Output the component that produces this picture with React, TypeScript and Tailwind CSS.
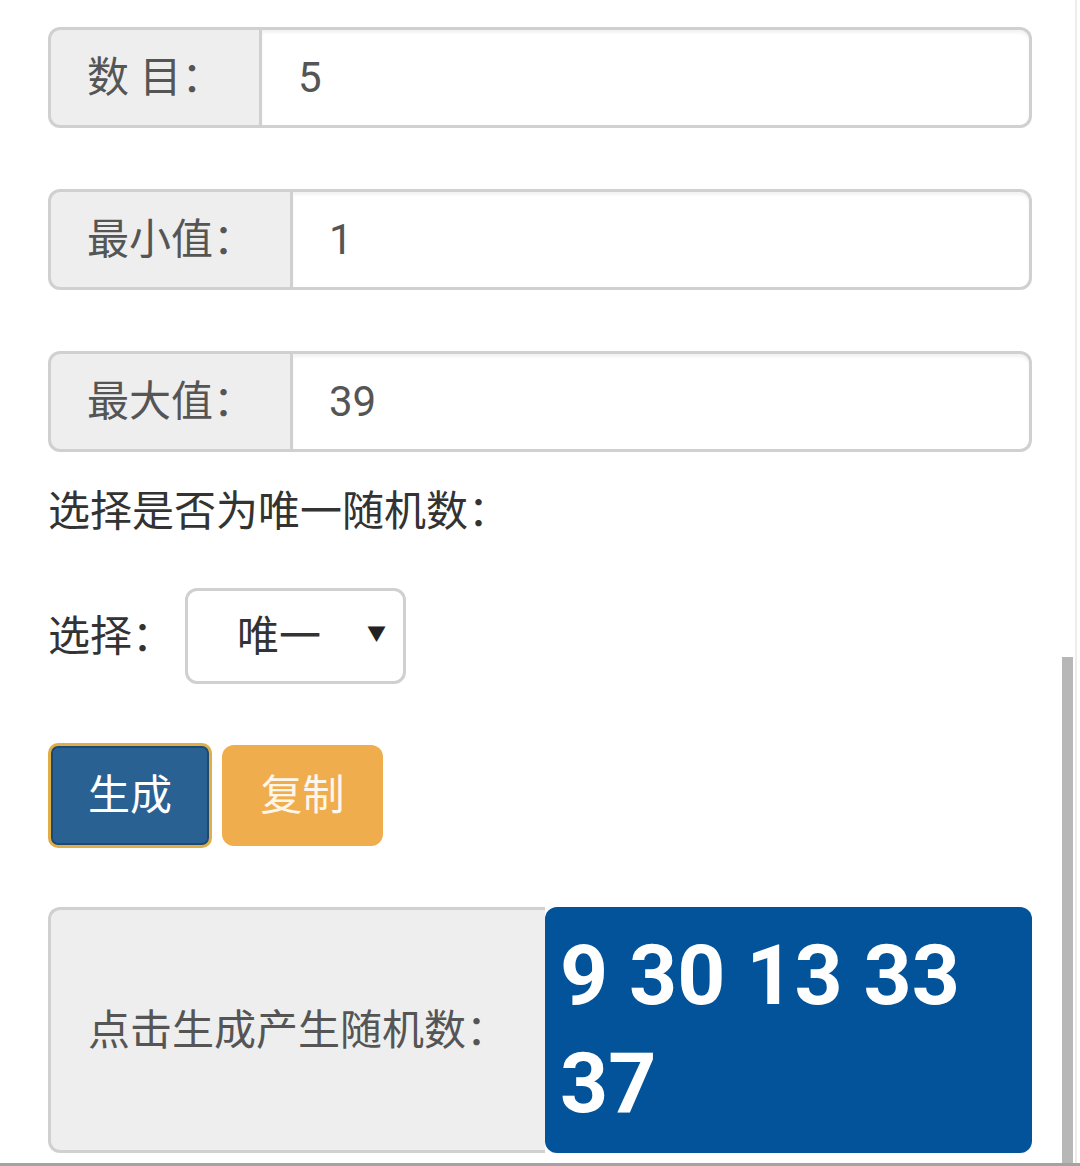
import React from "react";

const font = { fontFamily: 'Roboto, "Noto Sans CJK SC", sans-serif' };

function Group({ label, value, addonW }: { label: string; value: string; addonW: string }) {
  return (
    <div className="flex h-[101px] w-full">
      <div
        className={`${addonW} flex items-center rounded-l-[12px] border-[3px] border-[#d0d0d0] bg-[#eeeeee] pl-[36px] text-[42px] text-[#555555]`}
      >
        {label}
      </div>
      <div className="flex flex-1 items-center rounded-r-[12px] border-[3px] border-l-0 border-[#d0d0d0] bg-white pl-[36px] text-[42px] text-[#555555] shadow-[inset_0_3px_3px_rgba(0,0,0,0.05)]">
        {value}
      </div>
    </div>
  );
}

export default function App() {
  return (
    <div className="relative h-[1166px] w-[1080px] overflow-hidden bg-white" style={font}>
      <div className="flex flex-col px-[48px] pt-[27px]">
        <Group label="数 目：" value="5" addonW="w-[214px]" />
        <div className="mt-[61px]">
          <Group label="最小值：" value="1" addonW="w-[245px]" />
        </div>
        <div className="mt-[61px]">
          <Group label="最大值：" value="39" addonW="w-[245px]" />
        </div>
        <div className="mt-[30px] h-[60px] text-[42px] leading-[60px] text-[#333333]">选择是否为唯一随机数：</div>
        <div className="mt-[46px] flex h-[96px] items-center text-[42px] text-[#333333]">
          <span className="w-[137px]">选择：</span>
          <div className="relative flex h-[96px] w-[221px] items-center rounded-[12px] border-[3px] border-[#d0d0d0] bg-white pl-[49px] text-[#333333]">
            唯一
            <span className="absolute right-[17px] top-[34px] text-[19px] leading-none text-[#222222]">▼</span>
          </div>
        </div>
        <div className="mt-[59px] flex h-[105px] items-center">
          <div className="flex h-[105px] w-[164px] items-center justify-center rounded-[10px] border-[3px] border-[#e0ae48] bg-[#2a6193] text-[42px] text-white shadow-[inset_0_0_0_2px_#1e4a72]">
            生成
          </div>
          <div className="ml-[10px] flex h-[101px] w-[161px] items-center justify-center rounded-[12px] bg-[#f0ad4e] text-[42px] text-[#fdf6ea]">
            复制
          </div>
        </div>
        <div className="mt-[59px] flex h-[246px]">
          <div className="flex w-[497px] items-center rounded-l-[12px] border-[3px] border-r-0 border-[#d0d0d0] bg-[#eeeeee] pl-[37px] text-[42px] text-[#555555]">
            点击生成产生随机数：
          </div>
          <div className="flex-1 rounded-[12px] bg-[#02539a] px-[15px] py-[15px] text-[84px] font-bold leading-[108px] text-white">
            9 30 13 33 37
          </div>
        </div>
      </div>
      <div className="absolute right-[3px] top-0 h-full w-[2px] bg-[#ececec]" />
      <div className="absolute left-[1062px] top-[657px] h-[509px] w-[11px] bg-[#b7b7b7]" />
      <div className="absolute bottom-0 left-0 h-[3px] w-full bg-[#a3a3a3]" />
    </div>
  );
}
